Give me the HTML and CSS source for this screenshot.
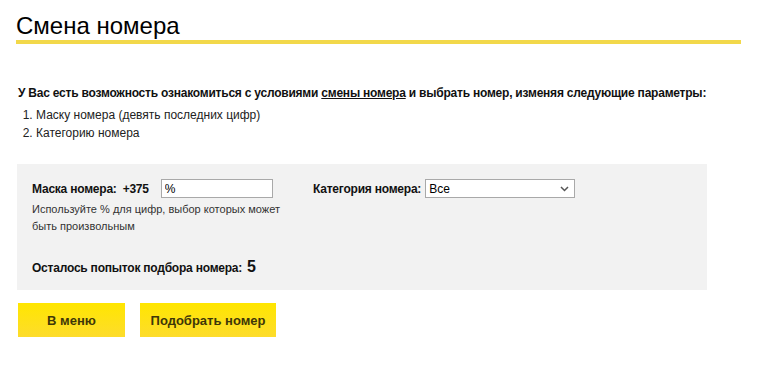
FILE: index.html
```html
<!DOCTYPE html>
<html lang="ru">
<head>
<meta charset="utf-8">
<title>Смена номера</title>
<link rel="stylesheet" href="styles.css">
</head>
<body>
<div class="page">
  <h1 class="title">Смена номера</h1>
  <p class="intro">У Вас есть возможность ознакомиться с условиями <a href="#" class="link">смены номера</a> и выбрать номер, изменяя следующие параметры:</p>
  <ol class="params">
    <li>Маску номера (девять последних цифр)</li>
    <li>Категорию номера</li>
  </ol>
  <div class="panel">
    <div class="row">
      <div class="col col-mask">
        <div class="field">
          <span class="label">Маска номера:</span>
          <span class="label prefix">+375</span>
          <input class="input" type="text" value="%">
        </div>
        <div class="hint">Используйте % для цифр, выбор которых может быть произвольным</div>
      </div>
      <div class="col col-cat">
        <div class="field">
          <span class="label">Категория номера:</span>
          <div class="select">
            <span class="select-value">Все</span>
            <svg class="chevron" width="9" height="6" viewBox="0 0 9 6"><path d="M1 1 L4.5 4.5 L8 1" fill="none" stroke="#555" stroke-width="1.5"/></svg>
          </div>
        </div>
      </div>
    </div>
    <div class="attempts"><span class="label">Осталось попыток подбора номера:</span> <span class="count">5</span></div>
  </div>
  <div class="actions">
    <button class="btn btn-menu" type="button">В меню</button>
    <button class="btn btn-pick" type="button">Подобрать номер</button>
  </div>
</div>
</body>
</html>
```
FILE: styles.css
```css
html, body {
  margin: 0;
  padding: 0;
  background: #fff;
}
body {
  font-family: "Liberation Sans", Arial, sans-serif;
  color: #000;
}
.page {
  padding: 0 16px 0 16px;
  width: 725px;
}
.title {
  margin: 13px 0 0 0;
  font-size: 24px;
  font-weight: normal;
  line-height: 26px;
  padding-bottom: 1px;
  border-bottom: 4px solid #f2d84a;
}
.intro {
  margin: 41px 0 0 2px;
  font-size: 12px;
  font-weight: bold;
  letter-spacing: -0.22px;
  line-height: 16px;
  color: #111;
}
.link {
  color: #111;
  text-decoration: underline;
}
.params {
  margin: 6px 0 0 0;
  padding-left: 20px;
  font-size: 12px;
  line-height: 17.5px;
  color: #222;
}
.panel {
  margin: 22px 0 0 1px;
  width: 690px;
  height: 126px;
  box-sizing: border-box;
  background: #f2f2f2;
  padding: 15px 15px 0 15px;
}
.row {
  display: flex;
}
.col-mask {
  width: 281px;
}
.field {
  display: flex;
  align-items: center;
  height: 19px;
}
.label {
  font-size: 12px;
  font-weight: bold;
  letter-spacing: -0.22px;
  color: #111;
}
.prefix {
  margin-left: 6px;
  margin-right: 12px;
}
.input {
  width: 112px;
  height: 19px;
  box-sizing: border-box;
  border: 1px solid #a9a9a9;
  background: #fff;
  padding: 0 3px;
  margin: 0;
  font-family: "Liberation Sans", Arial, sans-serif;
  font-size: 12px;
  color: #000;
  outline: none;
}
.hint {
  margin-top: 3px;
  width: 260px;
  font-size: 11px;
  line-height: 17px;
  color: #333;
}
.select {
  margin-left: 4px;
  width: 150px;
  height: 19px;
  box-sizing: border-box;
  border: 1px solid #a9a9a9;
  background: #fff;
  display: flex;
  align-items: center;
  justify-content: space-between;
  padding: 0 5px 0 3px;
}
.select-value {
  font-size: 12px;
  color: #000;
}
.attempts {
  margin-top: 23px;
  display: flex;
  align-items: baseline;
}
.count {
  margin-left: 5px;
  font-size: 16px;
  font-weight: bold;
  color: #111;
}
.actions {
  display: flex;
  gap: 15px;
  margin: 13px 0 0 2px;
}
.btn {
  height: 34px;
  border: none;
  padding: 0;
  margin: 0;
  background: linear-gradient(#ffe600, #fddc2c);
  font-family: "Liberation Sans", Arial, sans-serif;
  font-size: 13px;
  font-weight: bold;
  color: #3e3708;
  cursor: pointer;
}
.btn-menu {
  width: 107px;
}
.btn-pick {
  width: 136px;
}
```
